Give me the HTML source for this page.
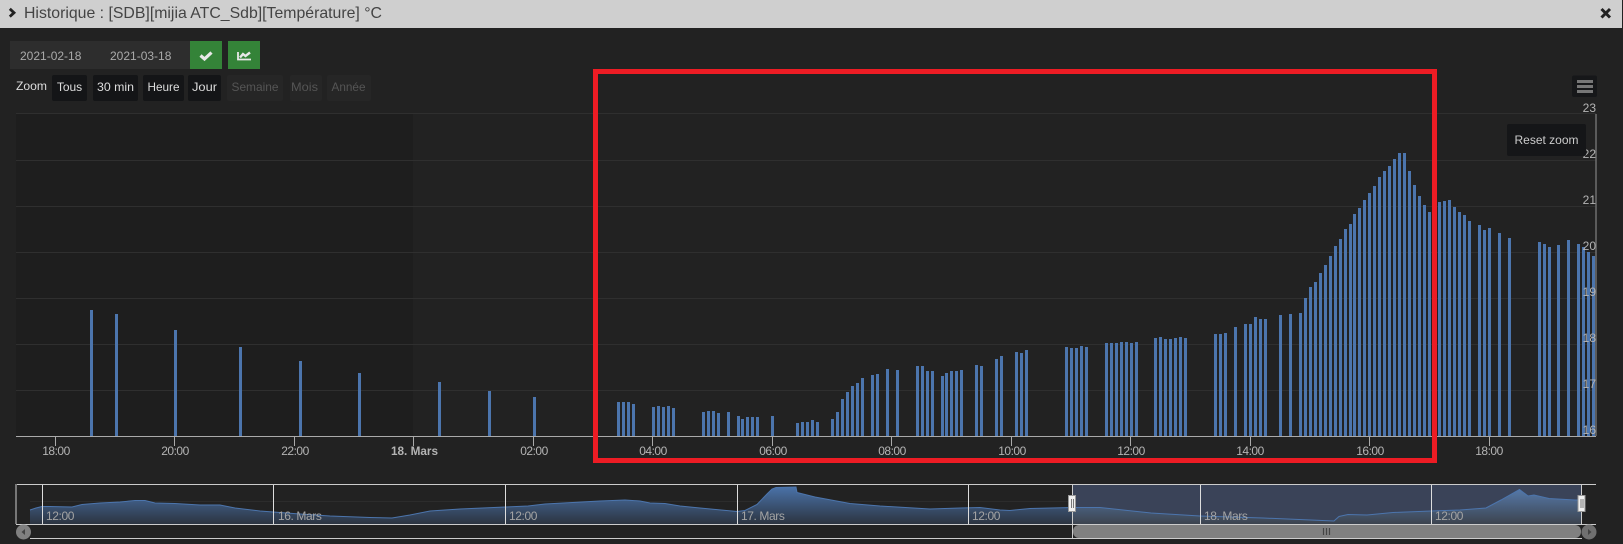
<!DOCTYPE html>
<html><head><meta charset="utf-8"><title>Historique</title>
<style>
html,body{margin:0;padding:0;background:#222;width:1623px;height:544px;overflow:hidden}
svg{display:block;font-family:"Liberation Sans",sans-serif}
</style></head><body>
<svg width="1623" height="544" viewBox="0 0 1623 544" xmlns="http://www.w3.org/2000/svg">
<defs>
<linearGradient id="ag" x1="0" y1="487" x2="0" y2="524" gradientUnits="userSpaceOnUse"><stop offset="0" stop-color="#4a72a8"/><stop offset="1" stop-color="#2c3440"/></linearGradient>
</defs>
<rect width="1623" height="544" fill="#222"/>
<!-- title bar -->
<rect width="1622" height="28" fill="#cfcfcf"/>
<path d="M9.800 8.800 L14 12.700 L9.800 16.600" fill="none" stroke="#222" stroke-width="2.800"/>
<text x="24" y="18" font-size="16" fill="#444" textLength="358" lengthAdjust="spacingAndGlyphs">Historique : [SDB][mijia ATC_Sdb][Température] °C</text>
<path d="M1601.500 9 L1610 17.500 M1610 9 L1601.500 17.500" stroke="#222" stroke-width="3" fill="none"/>
<!-- date row -->
<rect x="10" y="41" width="180" height="28" fill="#2d2d2d"/>
<text x="20" y="60" font-size="12" fill="#aaa">2021-02-18</text>
<text x="110" y="60" font-size="12" fill="#aaa">2021-03-18</text>
<rect x="190" y="41" width="32" height="28" fill="#348338"/>
<path d="M200.500 55.500 L204.500 59 L211.500 52.500" fill="none" stroke="#e8e8e8" stroke-width="3.200"/>
<rect x="228" y="41" width="32" height="28" fill="#348338"/>
<path d="M238 52 V59.500 H251" fill="none" stroke="#e8e8e8" stroke-width="1.800"/>
<path d="M240 57.500 L243 54 L245.500 56 L250 52.500" fill="none" stroke="#e8e8e8" stroke-width="2.400"/>
<!-- zoom row -->
<text x="16" y="90" font-size="12" fill="#ddd" textLength="31" lengthAdjust="spacingAndGlyphs">Zoom</text>
<g fill="#141517">
<rect x="52" y="75" width="35" height="26" rx="2"/>
<rect x="93" y="75" width="45" height="26" rx="2"/>
<rect x="143" y="75" width="41" height="26" rx="2"/>
<rect x="188" y="75" width="33" height="26" rx="2"/>
</g>
<g fill="#262626">
<rect x="227" y="75" width="56" height="26" rx="2"/>
<rect x="290" y="75" width="32" height="26" rx="2"/>
<rect x="327" y="75" width="44" height="26" rx="2"/>
</g>
<g font-size="12" fill="#ddd" text-anchor="middle">
<text x="69.500" y="91">Tous</text>
<text x="115.500" y="91" textLength="37" lengthAdjust="spacingAndGlyphs">30 min</text>
<text x="163.500" y="91" textLength="32" lengthAdjust="spacingAndGlyphs">Heure</text>
<text x="204.500" y="91" textLength="25" lengthAdjust="spacingAndGlyphs">Jour</text>
</g>
<g font-size="12" fill="#555" text-anchor="middle">
<text x="255" y="91" textLength="47" lengthAdjust="spacingAndGlyphs">Semaine</text>
<text x="304.500" y="91" textLength="27" lengthAdjust="spacingAndGlyphs">Mois</text>
<text x="348.500" y="91" textLength="34" lengthAdjust="spacingAndGlyphs">Année</text>
</g>
<!-- plot -->
<rect x="16" y="114" width="397" height="322" fill="#1e1e1e"/>
<path d="M16 113.500H1596M16 160.500H1596M16 206.500H1596M16 252.500H1596M16 298.500H1596M16 344.500H1596M16 390.500H1596" stroke="#2f2f2f" stroke-width="1" fill="none"/>
<!-- bars -->
<path fill="none" stroke="#4c75ad" stroke-width="3" d="M91.500 310V436M116.500 314V436M175.500 330V436M240.500 347V436M300.500 361V436M359.500 373V436M439.500 382V436M489.500 391V436M534.500 397V436
M618.500 402V436M623.500 402V436M628.500 402V436M633.500 404V436M653.500 407V436M658.500 406V436M663.500 407V436M668.500 406V436M673.500 408V436M703.500 412V436M708.500 411V436M713.500 411V436M718.500 413V436M728.500 412V436M738.500 416V436M742.500 419V436M747.500 417V436M752.500 417V436M757.500 417V436M772.500 416V436M797.500 423V436M802.500 422V436M807.500 422V436M812.500 420V436M817.500 422V436M832.500 419V436M837.500 412V436M842.500 399V436M847.500 392V436M852.500 386V436M857.500 383V436M862.500 378V436M872.500 375V436M877.500 374V436M887.500 369V436M897.500 370V436M917.500 366V436M922.500 366V436M927.500 371V436M932.500 371V436M942.500 376V436M946.500 373V436M951.500 371V436M956.500 371V436M961.500 370V436M976.500 365V436M981.500 366V436
M996.500 359V436M1001.500 356V436M1016.500 352V436M1021.500 353V436M1026.500 350V436M1066.500 347V436M1071.500 348V436M1076.500 348V436M1081.500 346V436M1086.500 347V436M1106.500 343V436M1111.500 343V436M1116.500 343V436M1121.500 342V436M1126.500 342V436M1131.500 343V436M1136.500 342V436M1155.500 338V436M1160.500 337V436M1165.500 339V436M1170.500 339V436M1175.500 338V436M1180.500 337V436M1185.500 338V436M1215.500 334V436M1220.500 334V436M1225.500 333V436M1235.500 327V436M1245.500 324V436M1250.500 324V436M1255.500 317V436M1260.500 319V436M1265.500 319V436M1280.500 315V436M1290.500 314V436
M1300.500 313V436M1305.500 298V436M1310.500 287V436M1315.500 282V436M1320.500 273V436M1325.500 265V436M1330.500 256V436M1335.500 246V436M1340.500 239V436M1345.500 229V436M1350.500 224V436M1354.500 214V436M1359.500 208V436M1364.500 200V436M1369.500 193V436M1374.500 186V436M1379.500 177V436M1384.500 171V436M1389.500 166V436M1394.500 159V436M1399.500 153V436M1404.500 153V436M1409.500 171V436M1414.500 185V436M1419.500 196V436M1424.500 205V436M1429.500 212V436M1439.500 202V436M1444.500 201V436M1449.500 200V436M1454.500 207V436M1459.500 212V436M1464.500 215V436M1469.500 221V436M1479.500 225V436M1484.500 230V436M1489.500 228V436M1499.500 233V436M1509.500 238V436M1539.500 242V436M1544.500 244V436M1549.500 247V436M1558.500 245V436M1568.500 240V436M1578.500 244V436M1583.500 247V436M1588.500 252V436M1593.500 256V436"/>
<!-- axes -->
<path d="M16 436.500H1596" stroke="#aaa" stroke-width="1"/>
<path d="M1596 114V436" stroke="#6e6e6e" stroke-width="1.500"/>
<path d="M55.500 436V446M174.500 436V446M294.500 436V446M413.500 436V446M533.500 436V446M652.500 436V446M772.500 436V446M891.500 436V446M1011.500 436V446M1130.500 436V446M1250.500 436V446M1369.500 436V446M1489.500 436V446" stroke="#aaa" stroke-width="1"/>
<g font-size="12" fill="#b4b4b4" text-anchor="end">
<text x="1596" y="112">23</text>
<text x="1596" y="158">22</text>
<text x="1596" y="204">21</text>
<text x="1596" y="250">20</text>
<text x="1596" y="296">19</text>
<text x="1596" y="342">18</text>
<text x="1596" y="388">17</text>
<text x="1596" y="434">16</text>
</g>
<g font-size="12" fill="#b4b4b4" text-anchor="middle" letter-spacing="-.5">
<text x="56" y="455">18:00</text>
<text x="175" y="455">20:00</text>
<text x="295" y="455">22:00</text>
<text x="414.500" y="455" font-weight="bold" letter-spacing="0" textLength="47" lengthAdjust="spacingAndGlyphs">18. Mars</text>
<text x="534" y="455">02:00</text>
<text x="653" y="455">04:00</text>
<text x="773" y="455">06:00</text>
<text x="892" y="455">08:00</text>
<text x="1012" y="455">10:00</text>
<text x="1131" y="455">12:00</text>
<text x="1250" y="455">14:00</text>
<text x="1370" y="455">16:00</text>
<text x="1489" y="455">18:00</text>
</g>
<!-- menu button -->
<rect x="1572" y="75.500" width="25" height="21.500" rx="2" fill="#161719"/>
<path d="M1577 81.500H1593M1577 86.500H1593M1577 91.500H1593" stroke="#777" stroke-width="3"/>
<!-- reset zoom -->
<rect x="1507" y="124" width="79" height="32" rx="2" fill="#151618"/>
<text x="1546.500" y="144" font-size="12" fill="#ccc" text-anchor="middle" textLength="64" lengthAdjust="spacingAndGlyphs">Reset zoom</text>
<!-- navigator -->
<path d="M30 501.500H1582" stroke="#2c2c2c" stroke-width="1"/>
<rect x="1072" y="485" width="510" height="39" fill="#3a4358"/>
<path fill="url(#ag)" d="M30 510L36 508L42 506.500L50 506.500L72 507L82 504.500L100 503L120 502L135 500.500L145 500.500L155 503L175 503.500L200 505L220 505L235 508L260 511L300 514L330 516L370 517.500L392 518L410 515L430 511L460 509L505 507L528 506L545 504L600 501L625 500L640 501L650 503L665 503.500L680 506L700 508L737 511.500L745 510.500L757 504.500L767 494L772 489L776 487.500L796 487L797 492.500L815 497L850 503.500L880 506L930 509L960 508L980 507.500L1000 510L1010 510.500L1030 508.500L1072 507.500L1100 507.500L1151 513L1200 516L1263 518L1334 521L1339 516.500L1348 514.500L1367 515L1393 512.500L1431 511L1460 510L1486 508L1501 500L1519.500 489.500L1528 496L1534 495L1549 498.500L1575 500L1582 500V524H30Z"/>
<path fill="#fff" fill-opacity=".08" d="M1072 507.500L1100 507.500L1151 513L1200 516L1263 518L1334 521L1339 516.500L1348 514.500L1367 515L1393 512.500L1431 511L1460 510L1486 508L1501 500L1519.500 489.500L1528 496L1534 495L1549 498.500L1575 500L1582 500V524H1072Z"/>
<path fill="none" stroke="#4c75ad" stroke-width="1" d="M30 510L36 508L42 506.500L50 506.500L72 507L82 504.500L100 503L120 502L135 500.500L145 500.500L155 503L175 503.500L200 505L220 505L235 508L260 511L300 514L330 516L370 517.500L392 518L410 515L430 511L460 509L505 507L528 506L545 504L600 501L625 500L640 501L650 503L665 503.500L680 506L700 508L737 511.500L745 510.500L757 504.500L767 494L772 489L776 487.500L796 487L797 492.500L815 497L850 503.500L880 506L930 509L960 508L980 507.500L1000 510L1010 510.500L1030 508.500L1072 507.500L1100 507.500L1151 513L1200 516L1263 518L1334 521L1339 516.500L1348 514.500L1367 515L1393 512.500L1431 511L1460 510L1486 508L1501 500L1519.500 489.500L1528 496L1534 495L1549 498.500L1575 500L1582 500"/>
<path d="M16 484.500H1596M16 524.500H1596M30 538.500H1582" stroke="#ccc" stroke-width="1" fill="none"/>
<path d="M42.500 485V524M273.500 485V524M505.500 485V524M737.500 485V524M968.500 485V524M1200.500 485V524M1431.500 485V524" stroke="#ddd" stroke-width="1"/>
<path d="M16 484V524" stroke="#777" stroke-width="2"/>
<g font-size="12" fill="#a4a4a4" letter-spacing="-.4">
<text x="46" y="520">12:00</text>
<text x="278" y="520">16. Mars</text>
<text x="509" y="520">12:00</text>
<text x="741" y="520">17. Mars</text>
<text x="972" y="520">12:00</text>
<text x="1204" y="520">18. Mars</text>
<text x="1435" y="520">12:00</text>
</g>
<!-- scrollbar -->
<rect x="1073" y="525" width="508" height="13" rx="6" fill="#808080"/>
<path d="M1323.500 528V535M1326.500 528V535M1329.500 528V535" stroke="#444" stroke-width="1.200"/>
<circle cx="23.500" cy="532" r="7.500" fill="#808080"/>
<path d="M25 529V535L21.500 532Z" fill="#444"/>
<circle cx="1589" cy="532" r="7.500" fill="#707070"/>
<path d="M1588 529V535L1591.500 532Z" fill="#444"/>
<path d="M1072.500 485V538M1581.500 485V524" stroke="#ccc" stroke-width="1"/>
<rect x="1068.500" y="495.500" width="7" height="16" fill="#f0f0f0" stroke="#999"/>
<rect x="1578" y="495.500" width="7" height="16" fill="#f0f0f0" stroke="#999"/>
<path d="M1071.500 499V508M1073.500 499V508M1581 499V508M1583 499V508" stroke="#777" stroke-width="1"/>
<!-- red annotation -->
<rect x="595.500" y="71.500" width="839" height="389" fill="none" stroke="#ed1c24" stroke-width="5"/>
</svg>
</body></html>
